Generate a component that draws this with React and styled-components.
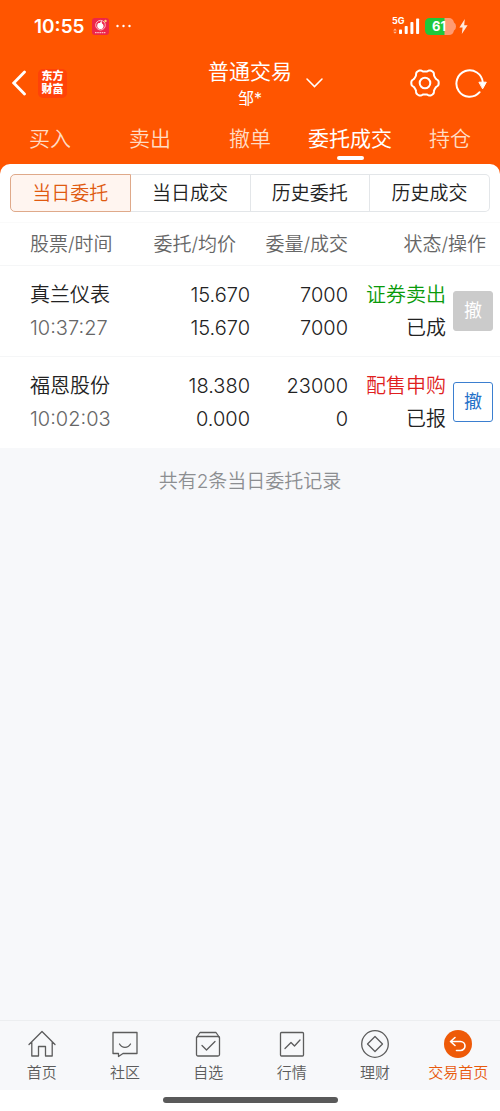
import React from 'react';
import styled, { createGlobalStyle } from 'styled-components';

const GlobalStyle = createGlobalStyle`
    * {
        box-sizing: border-box;
    }

    body {
        margin: 0;
        background: #fff;
        font-family: Inter, 'Noto Sans CJK SC', sans-serif;
        font-weight: 350;
        color: #222;
    }

    button {
        font-family: inherit;
        font-weight: inherit;
        padding: 0;
        margin: 0;
        border: 0;
        background: none;
        cursor: pointer;
    }

    svg {
        display: block;
        flex: none;
    }
`;

const Page = styled.div`
    display: flex;
    flex-direction: column;
    min-height: 100vh;
    background: #f7f8fa;
`;

const Header = styled.header`
    background: #ff5500;
    color: #fff;
    padding-bottom: 14px;
`;

const StatusBar = styled.div`
    display: flex;
    align-items: center;
    justify-content: space-between;
    height: 52px;
    padding: 0 32px 0 34px;
`;

const StatusGroup = styled.div`
    display: flex;
    align-items: center;
    gap: ${props => props.$gap}px;
`;

const Clock = styled.span`
    padding-top: 2px;
    font-size: 19px;
    font-weight: 600;
    line-height: 24px;
`;

const TitleBar = styled.div`
    display: grid;
    grid-template-columns: 1fr auto 1fr;
    align-items: center;
    height: 62px;
    padding: 0 13px 0 12px;
`;

const TitleSide = styled.div`
    display: flex;
    align-items: center;
    justify-content: ${props => props.$end ? 'flex-end' : 'flex-start'};
    gap: ${props => props.$end ? 15 : 12}px;
`;

const Logo = styled.div`
    width: 29px;
    height: 29px;
    border-radius: 5px;
    background: #ff4208;
    display: flex;
    flex-direction: column;
    align-items: center;
    justify-content: center;
    font-size: 11px;
    font-weight: 900;
    line-height: 13px;
`;

const AccountButton = styled.button`
    display: flex;
    align-items: center;
    gap: 14px;
    padding-left: 32px;
    color: #fff;
`;

const AccountText = styled.span`
    display: flex;
    flex-direction: column;
    align-items: center;
    padding-top: 2px;
`;

const AccountTitle = styled.span`
    font-size: 21px;
    font-weight: 400;
    line-height: 28px;
`;

const AccountName = styled.span`
    font-size: 16px;
    font-weight: 400;
    line-height: 24px;
`;

const MainTabs = styled.nav`
    display: flex;
    height: 50px;
`;

const MainTab = styled.a`
    flex: 1;
    display: flex;
    flex-direction: column;
    align-items: center;
    justify-content: flex-end;
    gap: 2px;
    padding-bottom: 4px;
    font-size: 21px;
    font-weight: ${props => props.$active ? 400 : 350};
    line-height: 30px;
    white-space: nowrap;
    text-decoration: none;
    color: ${props => props.$active ? '#fff' : '#ffdcc4'};

    &::after {
        content: '';
        width: 27px;
        height: 4px;
        border-radius: 2px;
        background: ${props => props.$active ? '#fff' : 'transparent'};
    }
`;

const Panel = styled.main`
    margin-top: -14px;
    padding-top: 10px;
    border-radius: 10px 10px 0 0;
    background: #fff;
`;

const Segments = styled.div`
    display: flex;
    margin: 0 10px 10px;
`;

const Segment = styled.button`
    flex: 1;
    height: 38px;
    padding-top: 2px;
    font-size: 19px;
    line-height: 28px;
    color: ${props => props.$active ? '#e05a10' : '#222'};
    background: ${props => props.$active ? '#fff5f0' : '#fff'};
    border: 1px solid ${props => props.$active ? '#dfa98a' : '#e3e6e9'};
    border-left-width: ${props => props.$first ? 1 : 0}px;

    &:first-child {
        border-radius: 5px 0 0 5px;
    }

    &:last-child {
        border-radius: 0 5px 5px 0;
    }
`;

const OrderTable = styled.table`
    width: 100%;
    table-layout: fixed;
    border-collapse: collapse;
`;

const HeadCell = styled.th`
    height: 43px;
    padding: 2px ${props => props.$right || 0}px 0 ${props => props.$left || 0}px;
    border-top: 1px solid #fafafa;
    font-size: 19px;
    font-weight: 350;
    line-height: 28px;
    white-space: nowrap;
    text-align: ${props => props.$left ? 'left' : 'right'};
    color: #666;
`;

const Cell = styled.td`
    height: 91px;
    padding: ${props => props.$top || 0}px ${props => props.$right || 0}px 0 ${props => props.$left || 0}px;
    border-top: 1px solid #f5f6f7;
    white-space: nowrap;
    text-align: ${props => props.$left ? 'left' : 'right'};
`;

const Line = styled.div`
    font-size: 20px;
    line-height: 33px;
    color: ${props => props.$color || '#222'};
`;

const CancelButton = styled.button`
    display: block;
    width: 40px;
    height: 40px;
    margin-left: auto;
    border-radius: 3px;
    border: 1px solid #3b7fd0;
    background: #fff;
    color: #2470c8;
    font-size: 18px;
    font-weight: 400;
    line-height: 28px;

    &:disabled {
        border-color: #cbcbcb;
        background: #cbcbcb;
        color: #fff;
    }
`;

const Summary = styled.p`
    flex: 1;
    margin: 0;
    padding-top: 20px;
    text-align: center;
    font-size: 19px;
    line-height: 28px;
    color: #8c8e91;
`;

const BottomNav = styled.nav`
    display: flex;
    height: 70px;
    border-top: 1px solid #eceef0;
`;

const NavItem = styled.a`
    flex: 1;
    display: flex;
    flex-direction: column;
    align-items: center;
    gap: 4px;
    padding-top: 9px;
    font-size: 15px;
    line-height: 22px;
    white-space: nowrap;
    text-decoration: none;
    color: ${props => props.$active ? '#e85a0c' : '#5c5c5c'};
`;

const HomeArea = styled.div`
    height: 21px;
    padding-top: 7px;
    background: #fff;
`;

const HomeBar = styled.div`
    width: 35%;
    height: 6px;
    margin: 0 auto;
    border-radius: 3px;
    background: #5a5a5a;
`;

// six soft teeth around the centre of a 30x30 box
const gearPoints = [...Array(120)].map((_, i) => {
    const a = (i / 120) * Math.PI * 2;
    const r = 12.6 + 1.2 * Math.tanh(1.6 * Math.cos(6 * a));
    return `${(15 + r * Math.cos(a)).toFixed(2)},${(15 + r * Math.sin(a)).toFixed(2)}`;
}).join(' ');

const AppBadge = () => (
    <svg width="17" height="17" viewBox="0 0 17 17">
        <rect width="17" height="17" rx="3" fill="#ee2548" />
        <circle cx="8.5" cy="7.2" r="4.8" fill="none" stroke="#fbb9c2" strokeWidth="1" />
        <path d="M5.400 6.400c.4-1.400 1.600-1.600 2.600-1.400L9.400 2.600l.6 2.800c2.200 1 2.200 4.800-.6 5.600-3 .6-4.800-2-4-4.600z" fill="#fff" />
        <circle cx="13.5" cy="3" r="1.2" fill="#ffd27a" />
        <path d="M3 14.6h11" stroke="#fbb9c2" strokeWidth="1.2" strokeDasharray="1.6 .6" />
    </svg>
);

const Dots = () => (
    <svg width="15" height="4" viewBox="0 0 15 4" fill="#fff">
        <circle cx="1.5" cy="2" r="1.200" />
        <circle cx="7.500" cy="2" r="1.200" />
        <circle cx="13.500" cy="2" r="1.200" />
    </svg>
);

const Signal = () => (
    <svg width="30" height="22" viewBox="0 0 30 22" fill="#fff">
        <text x="0" y="9" fontSize="9" fontWeight="700" fontFamily="Inter, sans-serif">5G</text>
        <path d="M1.200 15.400l1.800-2 1.800 2zM1.200 16.800l1.800 2 1.800-2z" opacity=".6" />
        <rect x="7" y="14.500" width="3" height="4.500" rx=".8" />
        <rect x="12.700" y="11" width="3" height="8" rx=".8" />
        <rect x="18.400" y="7" width="3" height="12" rx=".8" />
        <rect x="24.100" y="3.500" width="3" height="15.500" rx=".8" />
    </svg>
);

const Battery = () => (
    <svg width="31" height="17" viewBox="0 0 31 17">
        <path d="M5 0h19q4 0 5 4.500q2 1 2 4t-2 4Q28 17 24 17H19V0z" fill="#ff9a72" />
        <path d="M5 0h14.500v17H5q-5 0-5-5V5q0-5 5-5z" fill="#1ec83c" />
        <text x="14" y="13" textAnchor="middle" fontSize="13" fontWeight="700" fontFamily="Inter, sans-serif" fill="#fff">61</text>
    </svg>
);

const Bolt = () => (
    <svg width="9" height="15" viewBox="0 0 9 15">
        <path d="M5.800 0L.4 8.400h3.200L2.800 15 8.600 6.200H5.200z" fill="#ffe9dc" />
    </svg>
);

const BackIcon = () => (
    <svg width="14" height="26" viewBox="0 0 14 26" fill="none" stroke="#fff" strokeWidth="2.800" strokeLinecap="round">
        <path d="M12.500 2L1.800 13l10.700 11" />
    </svg>
);

const ChevronIcon = () => (
    <svg width="17" height="10" viewBox="0 0 17 10" fill="none" stroke="#fff" strokeWidth="1.500" strokeLinecap="round">
        <path d="M1 1l7.500 7.600L16 1" />
    </svg>
);

const GearIcon = () => (
    <svg width="30" height="30" viewBox="0 0 30 30" fill="none" stroke="#fff" strokeWidth="2" strokeLinejoin="round">
        <polygon points={gearPoints} />
        <circle cx="15" cy="15" r="5.300" />
    </svg>
);

const RefreshIcon = () => (
    <svg width="32" height="30" viewBox="0 0 32 30" fill="none" stroke="#fff" strokeWidth="2" strokeLinecap="round">
        <path d="M24.600 24.200A13.200 13.200 0 1 1 27.800 14.600" />
        <path d="M24.300 14.200h7l-3.500 6.300z" fill="#fff" strokeWidth="1" strokeLinejoin="round" />
    </svg>
);

const iconPaths = {
    home: <path d="M1 14.500L14 1.500l13 13M3.800 12v14h6.700V16.500h7V26h6.700V12" />,
    community: (
        <>
            <path d="M2 2.500h24v21H12L7.500 26.500v-3H2z" />
            <path d="M8.500 14c2.500 4.500 8.500 4.500 11 0" />
        </>
    ),
    watch: (
        <>
            <rect x="2.500" y="6.500" width="23" height="19.500" rx="1.500" />
            <path d="M2.500 7.500L6 2.500h16l3.500 5M8 15.500l4.500 4.500 8.500-8.500" />
        </>
    ),
    market: (
        <>
            <rect x="2.500" y="2.500" width="23" height="23.500" rx="1" />
            <path d="M7 18.500l6-6 3.500 3.500 5.500-6" />
        </>
    ),
    wealth: (
        <>
            <circle cx="14" cy="14" r="13.300" />
            <path d="M14 6.500l7.500 7.500-7.500 7.500L6.500 14z" />
        </>
    ),
    trade: (
        <>
            <circle cx="14" cy="14" r="14" fill="#ee5a08" stroke="none" />
            <path d="M11 7.500L6.500 11.500 11 15.500M7 11.500h9.500a4.500 4.500 0 0 1 0 9H12.500" stroke="#fff" strokeWidth="1.600" />
        </>
    ),
};

const NavIcon = ({name}) => (
    <svg width="28" height="28" viewBox="0 0 28 28" fill="none" stroke="currentColor" strokeWidth="1.300" strokeLinecap="round" strokeLinejoin="round">
        {iconPaths[name]}
    </svg>
);

const tabs = ['买入', '卖出', '撤单', '委托成交', '持仓'];
const segments = ['当日委托', '当日成交', '历史委托', '历史成交'];

const orders = [
    {
        name: '真兰仪表', time: '10:37:27', price: '15.670', avg: '15.670',
        amount: '7000', filled: '7000', side: '证券卖出', sideColor: '#0a9a0a', state: '已成', done: true,
    },
    {
        name: '福恩股份', time: '10:02:03', price: '18.380', avg: '0.000',
        amount: '23000', filled: '0', side: '配售申购', sideColor: '#e01f1f', state: '已报', done: false,
    },
];

const navItems = [
    {icon: 'home', label: '首页'},
    {icon: 'community', label: '社区'},
    {icon: 'watch', label: '自选'},
    {icon: 'market', label: '行情'},
    {icon: 'wealth', label: '理财'},
    {icon: 'trade', label: '交易首页', active: true},
];

const Orders = () => (
    <OrderTable>
        <colgroup>
            <col style={{width: '30%'}} />
            <col style={{width: '20%'}} />
            <col style={{width: '20%'}} />
            <col />
            <col style={{width: '54px'}} />
        </colgroup>
        <thead>
            <tr>
                <HeadCell $left={30}>股票/时间</HeadCell>
                <HeadCell $right={14}>委托/均价</HeadCell>
                <HeadCell $right={2}>委量/成交</HeadCell>
                <HeadCell $right={14} colSpan={2}>状态/操作</HeadCell>
            </tr>
        </thead>
        <tbody>
            {orders.map((order) => (
                <tr key={order.time}>
                    <Cell $top={2} $left={30}>
                        <Line>{order.name}</Line>
                        <Line $color="#666">{order.time}</Line>
                    </Cell>
                    <Cell $top={2}>
                        <Line>{order.price}</Line>
                        <Line>{order.avg}</Line>
                    </Cell>
                    <Cell $top={2} $right={2}>
                        <Line>{order.amount}</Line>
                        <Line>{order.filled}</Line>
                    </Cell>
                    <Cell $top={2}>
                        <Line $color={order.sideColor}>{order.side}</Line>
                        <Line>{order.state}</Line>
                    </Cell>
                    <Cell $right={7}>
                        <CancelButton disabled={order.done}>撤</CancelButton>
                    </Cell>
                </tr>
            ))}
        </tbody>
    </OrderTable>
);

const App = () => (
    <>
        <GlobalStyle />
        <Page>
            <Header>
                <StatusBar>
                    <StatusGroup $gap={7}>
                        <Clock>10:55</Clock>
                        <AppBadge />
                        <Dots />
                    </StatusGroup>
                    <StatusGroup $gap={3}>
                        <Signal />
                        <Battery />
                        <Bolt />
                    </StatusGroup>
                </StatusBar>
                <TitleBar>
                    <TitleSide>
                        <button aria-label="返回"><BackIcon /></button>
                        <Logo>
                            <span>东方</span>
                            <span>财富</span>
                        </Logo>
                    </TitleSide>
                    <AccountButton>
                        <AccountText>
                            <AccountTitle>普通交易</AccountTitle>
                            <AccountName>邹*</AccountName>
                        </AccountText>
                        <ChevronIcon />
                    </AccountButton>
                    <TitleSide $end>
                        <button aria-label="设置"><GearIcon /></button>
                        <button aria-label="刷新"><RefreshIcon /></button>
                    </TitleSide>
                </TitleBar>
                <MainTabs>
                    {tabs.map((tab) => (
                        <MainTab key={tab} href="#" $active={tab === '委托成交'}>{tab}</MainTab>
                    ))}
                </MainTabs>
            </Header>
            <Panel>
                <Segments>
                    {segments.map((item, i) => (
                        <Segment key={item} $active={i === 0} $first={i === 0}>{item}</Segment>
                    ))}
                </Segments>
                <Orders />
            </Panel>
            <Summary>共有2条当日委托记录</Summary>
            <BottomNav>
                {navItems.map((item) => (
                    <NavItem key={item.label} href="#" $active={item.active}>
                        <NavIcon name={item.icon} />
                        {item.label}
                    </NavItem>
                ))}
            </BottomNav>
            <HomeArea>
                <HomeBar />
            </HomeArea>
        </Page>
    </>
);

export default App;
